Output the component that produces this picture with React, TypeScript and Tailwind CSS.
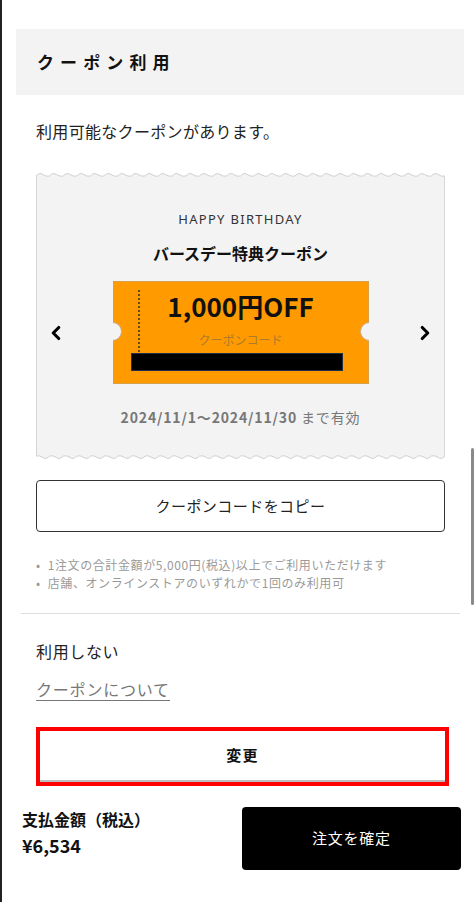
import { ChevronLeft, ChevronRight } from 'lucide-react';

const JP = "font-['Noto_Sans_CJK_JP','Noto_Sans',sans-serif]";

function WaveEdge({ width, flip }: { width: number; flip?: boolean }) {
  const p = 13.6;
  const n = Math.round(width / p);
  const step = width / n;
  let wave = `M0,4`;
  for (let i = 0; i < n; i++) {
    const x = i * step;
    wave += ` Q${x + step / 4},0 ${x + step / 2},2.5 Q${x + (3 * step) / 4},5 ${x + step},4`;
  }
  const fill = `${wave} L${width},9 L0,9 Z`;
  return (
    <svg width={width} height={9} viewBox={`0 0 ${width} 9`} className={`block ${flip ? 'rotate-180' : ''}`}>
      <path d={fill} fill="#f3f3f3" />
      <path d={wave} fill="none" stroke="#cfcfcf" strokeWidth={1} />
      <line x1={0.5} y1={4} x2={0.5} y2={9} stroke="#d6d6d6" />
      <line x1={width - 0.5} y1={4} x2={width - 0.5} y2={9} stroke="#d6d6d6" />
    </svg>
  );
}

export default function App() {
  return (
    <div className={`relative w-[476px] h-[902px] overflow-hidden bg-white border-l-2 border-[#222] ${JP}`}>
      {/* scrollbar */}
      <div className="absolute left-[469px] top-[448px] w-[3px] h-[157px] rounded bg-[#8a8a8a]" />

      <div className="pt-[29px]">
        <div className="ml-[14px] w-[448px] h-[66px] bg-[#f3f3f3] flex items-center pl-[21px]">
          <h2 className="text-[17px] font-bold tracking-[0.36em] text-[#111]">クーポン利用</h2>
        </div>

        <div className="ml-[34px] w-[409px]">
          <p className="mt-[25px] text-[16px] leading-[22px] tracking-[0.02em] text-[#222]">利用可能なクーポンがあります。</p>

          {/* coupon ticket */}
          <div className="mt-[30px]">
            <WaveEdge width={409} />
            <div className="bg-[#f3f3f3] border-x border-[#d6d6d6] pt-[29px] pb-[24px] flex flex-col items-center">
              <p className="font-['Noto_Sans',sans-serif] text-[13px] leading-[18px] tracking-[0.1em] text-[#333]">HAPPY BIRTHDAY</p>
              <p className="mt-[14px] text-[16px] leading-[22px] font-bold text-[#111]">バースデー特典クーポン</p>

              <div className="mt-[17px] w-full flex items-center justify-between px-[8px]">
                <ChevronLeft size={22} strokeWidth={3.4} className="text-black" />
                <div className="relative w-[256px] h-[103px] bg-[#ff9a00] overflow-hidden shadow-[inset_0_0_0_1px_#d9a04a] pt-[9px]">
                  <div className="absolute left-[-10px] top-[41px] w-[19px] h-[19px] rounded-full bg-[#f3f3f3] border border-[#c9b08a]" />
                  <div className="absolute right-[-10px] top-[41px] w-[19px] h-[19px] rounded-full bg-[#f3f3f3] border border-[#c9b08a]" />
                  <div className="absolute left-[25px] top-[9px] h-[62px] border-l-2 border-dotted border-[#6b4a10]" />
                  <p className="text-center text-[26px] leading-[32px] font-bold text-[#111]">1,000円OFF</p>
                  <p className="mt-[11px] text-center text-[12px] leading-[14px] text-[#b07a2a]">クーポンコード</p>
                  <div className="mt-[6px] ml-[18px] w-[212px] h-[18px] bg-black border border-[#1f2f4a]" />
                </div>
                <ChevronRight size={22} strokeWidth={3.4} className="text-black" />
              </div>

              <p className="mt-[23px] text-[14px] leading-[20px] tracking-[0.06em] font-semibold text-[#777]">2024/11/1〜2024/11/30 <span className="font-normal">まで有効</span></p>
            </div>
            <WaveEdge width={409} flip />
          </div>

          <button className="mt-[20px] w-full h-[52px] rounded-[4px] border border-[#333] bg-white text-[15px] tracking-[0.03em] text-[#222]">
            クーポンコードをコピー
          </button>

          <ul className="mt-[24px] text-[12px] leading-[18px] tracking-[0.05em] text-[#9a9a9a]">
            <li className="flex gap-[7px]"><span>•</span><span>1注文の合計金額が5,000円(税込)以上でご利用いただけます</span></li>
            <li className="flex gap-[7px]"><span>•</span><span>店舗、オンラインストアのいずれかで1回のみ利用可</span></li>
          </ul>

          <div className="mt-[21px] ml-[-15px] w-[439px] h-px bg-[#dedede]" />

          <p className="mt-[26px] text-[16px] leading-[22px] tracking-[0.04em] text-[#222]">利用しない</p>
          <p className="mt-[15px] text-[16px] leading-[24px] tracking-[0.05em] text-[#777] underline underline-offset-[4px]">クーポンについて</p>

          <div className="mt-[26px] w-[413px] h-[59px] border-[4px] border-[#ff0000] bg-white">
            <div className="h-full flex items-center justify-center border-b-2 border-[#bdbdbd]">
              <span className="text-[15px] font-bold tracking-[0.08em] text-[#111]">変更</span>
            </div>
          </div>
        </div>

        <div className="mt-[21px] flex items-start justify-between pl-[20px] pr-[15px]">
          <div className="pt-[1px]">
            <p className="text-[16px] leading-[22px] font-bold text-[#111]">支払金額（税込）</p>
            <p className="mt-[3px] text-[18px] leading-[24px] font-bold text-[#111]">¥6,534</p>
          </div>
          <button className="w-[219px] h-[63px] rounded-[4px] bg-black text-white text-[15px] tracking-[0.05em]">注文を確定</button>
        </div>
      </div>
    </div>
  );
}
